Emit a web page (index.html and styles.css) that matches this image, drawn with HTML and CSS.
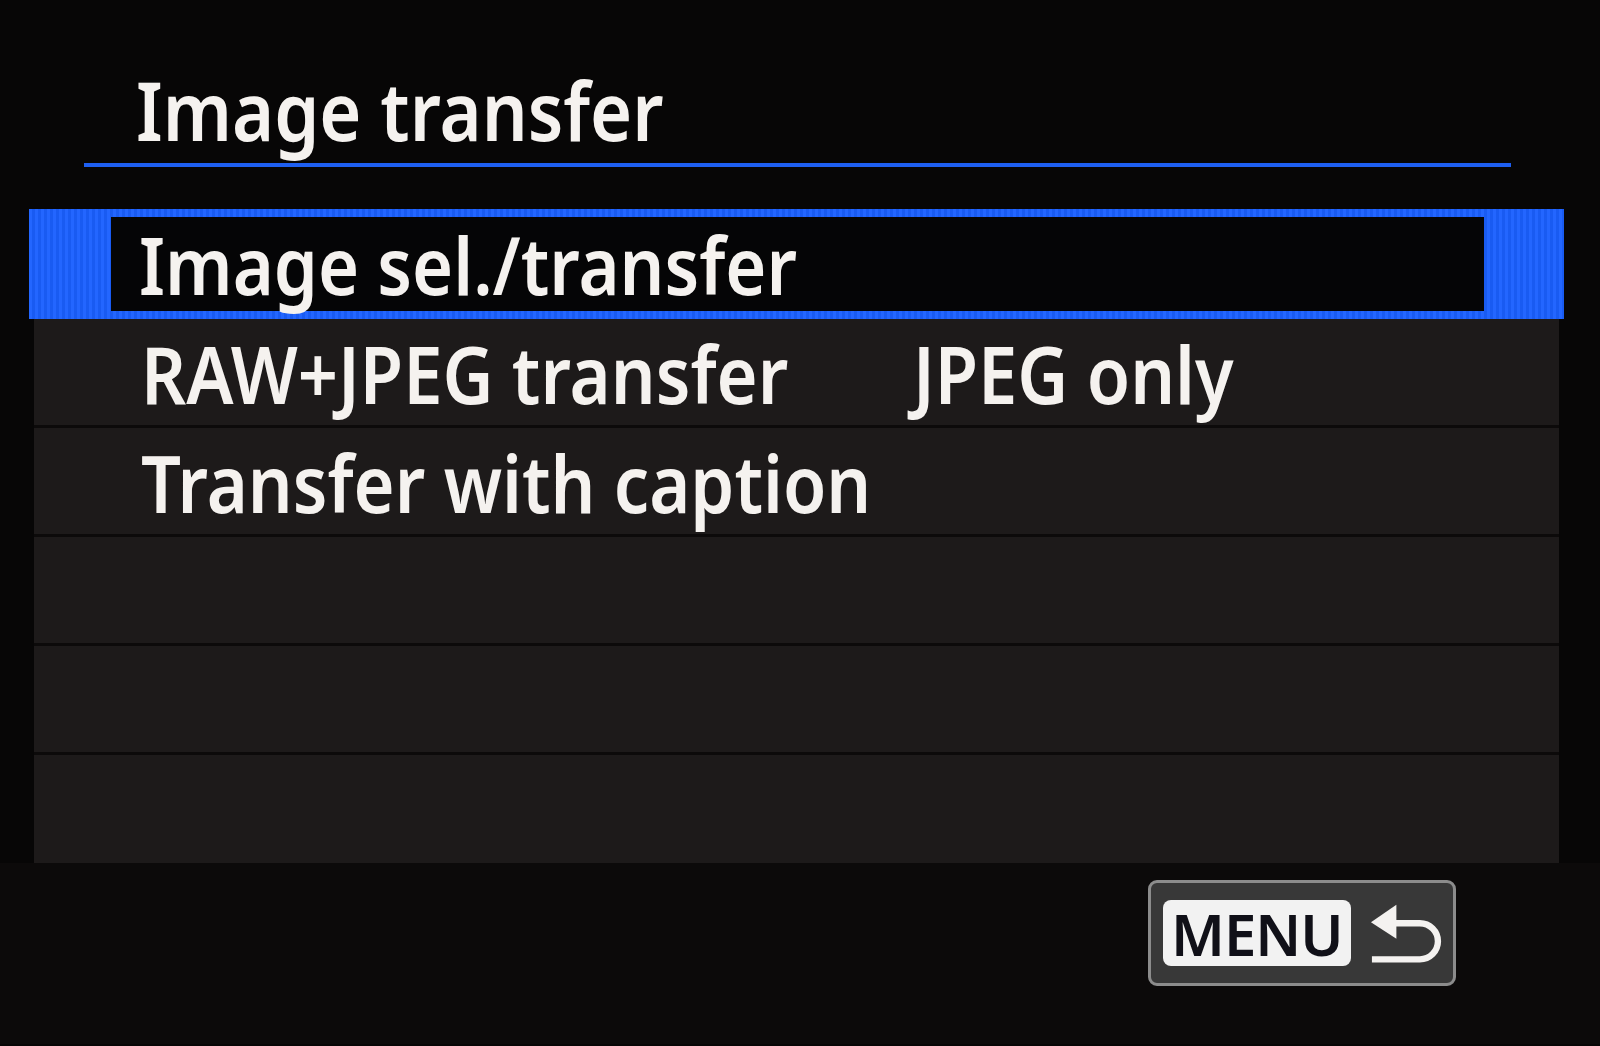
FILE: index.html
```html
<!DOCTYPE html>
<html lang="en">
<head>
    <meta charset="UTF-8">
    <meta name="viewport" content="width=device-width, initial-scale=1.0">
    <title>Image transfer</title>
    <link rel="stylesheet" href="styles.css">
</head>
<body>
<div class="screen">
    <div class="header">
        <h1>Image transfer</h1>
    </div>
    <div class="divider"></div>
    <div class="menu-list">
        <div class="row selected">
            <div class="row-inner"><span class="label">Image sel./transfer</span></div>
        </div>
        <div class="row">
            <span class="label">RAW+JPEG transfer</span>
            <span class="label">JPEG only</span>
        </div>
        <div class="row">
            <span class="label">Transfer with caption</span>
        </div>
        <div class="row"></div>
        <div class="row"></div>
        <div class="row last"></div>
    </div>
    <div class="footer">
        <div class="menu-btn">
            <span class="menu-key">MENU</span>
            <svg class="back-icon" width="78" height="70" viewBox="0 0 78 70">
                <polygon points="2,24 28,6 28,41" fill="#f4f2f0"/>
                <path d="M26 25 H52 A18.5 18.5 0 0 1 52 62 H3" fill="none" stroke="#f4f2f0" stroke-width="6.5"/>
            </svg>
        </div>
    </div>
</div>
</body>
</html>
```

FILE: styles.css
```css
body {
    margin: 0;
    padding: 0;
    background-color: #070606;
    color: #f5f2ef;
    font-family: "Noto Sans", "Open Sans", sans-serif;
}
.screen {
    width: 1600px;
    height: 1046px;
    overflow: hidden;
    background-color: #070606;
}
.header {
    padding: 68px 0 0 136px;
}
.header h1 {
    margin: 0;
    font-size: 82px;
    line-height: 82px;
    font-weight: 600;
    white-space: nowrap;
    transform: scaleX(0.88);
    transform-origin: left center;
}
.divider {
    margin: 13px 0 0 84px;
    width: 1427px;
    height: 4px;
    background-color: #1e5ff2;
}
.menu-list {
    margin: 42px 0 0 34px;
    width: 1525px;
    background-color: #1d1a1a;
}
.row {
    display: grid;
    grid-template-columns: 772px 1fr;
    height: 106px;
    padding-left: 107px;
    border-bottom: 3px solid #0c0a0a;
    font-size: 80px;
    line-height: 108px;
    font-weight: 600;
    white-space: nowrap;
}
.label {
    display: block;
    transform: scaleX(0.88);
    transform-origin: left center;
}
.row.last {
    border-bottom: none;
    height: 108px;
}
.row.selected {
    display: block;
    margin: 0 -5px;
    height: 94px;
    padding: 8px 80px 8px 82px;
    border-bottom: none;
    background-color: #1a60ff;
    background-image: repeating-linear-gradient(90deg, rgba(255,255,255,0.04) 0 3px, rgba(0,0,0,0.05) 3px 6px);
}
.row-inner {
    height: 94px;
    padding-left: 28px;
    background-color: #050506;
    line-height: 94px;
}
.footer {
    display: flex;
    justify-content: flex-end;
    padding: 17px 144px 0 0;
    height: 164px;
    background-color: #0c0a0a;
}
.menu-btn {
    display: flex;
    align-items: center;
    gap: 18px;
    box-sizing: border-box;
    width: 308px;
    height: 106px;
    padding: 0 8px 0 12px;
    background-color: #383838;
    border: 3px solid #8c8c8c;
    border-radius: 9px;
}
.menu-key {
    display: block;
    width: 192px;
    height: 66px;
    border-radius: 8px;
    background-color: #f2f2f2;
    color: #101018;
    font-size: 58px;
    line-height: 68px;
    font-weight: 600;
    text-align: center;
    letter-spacing: -1px;
}
.back-icon {
    display: block;
}
```
